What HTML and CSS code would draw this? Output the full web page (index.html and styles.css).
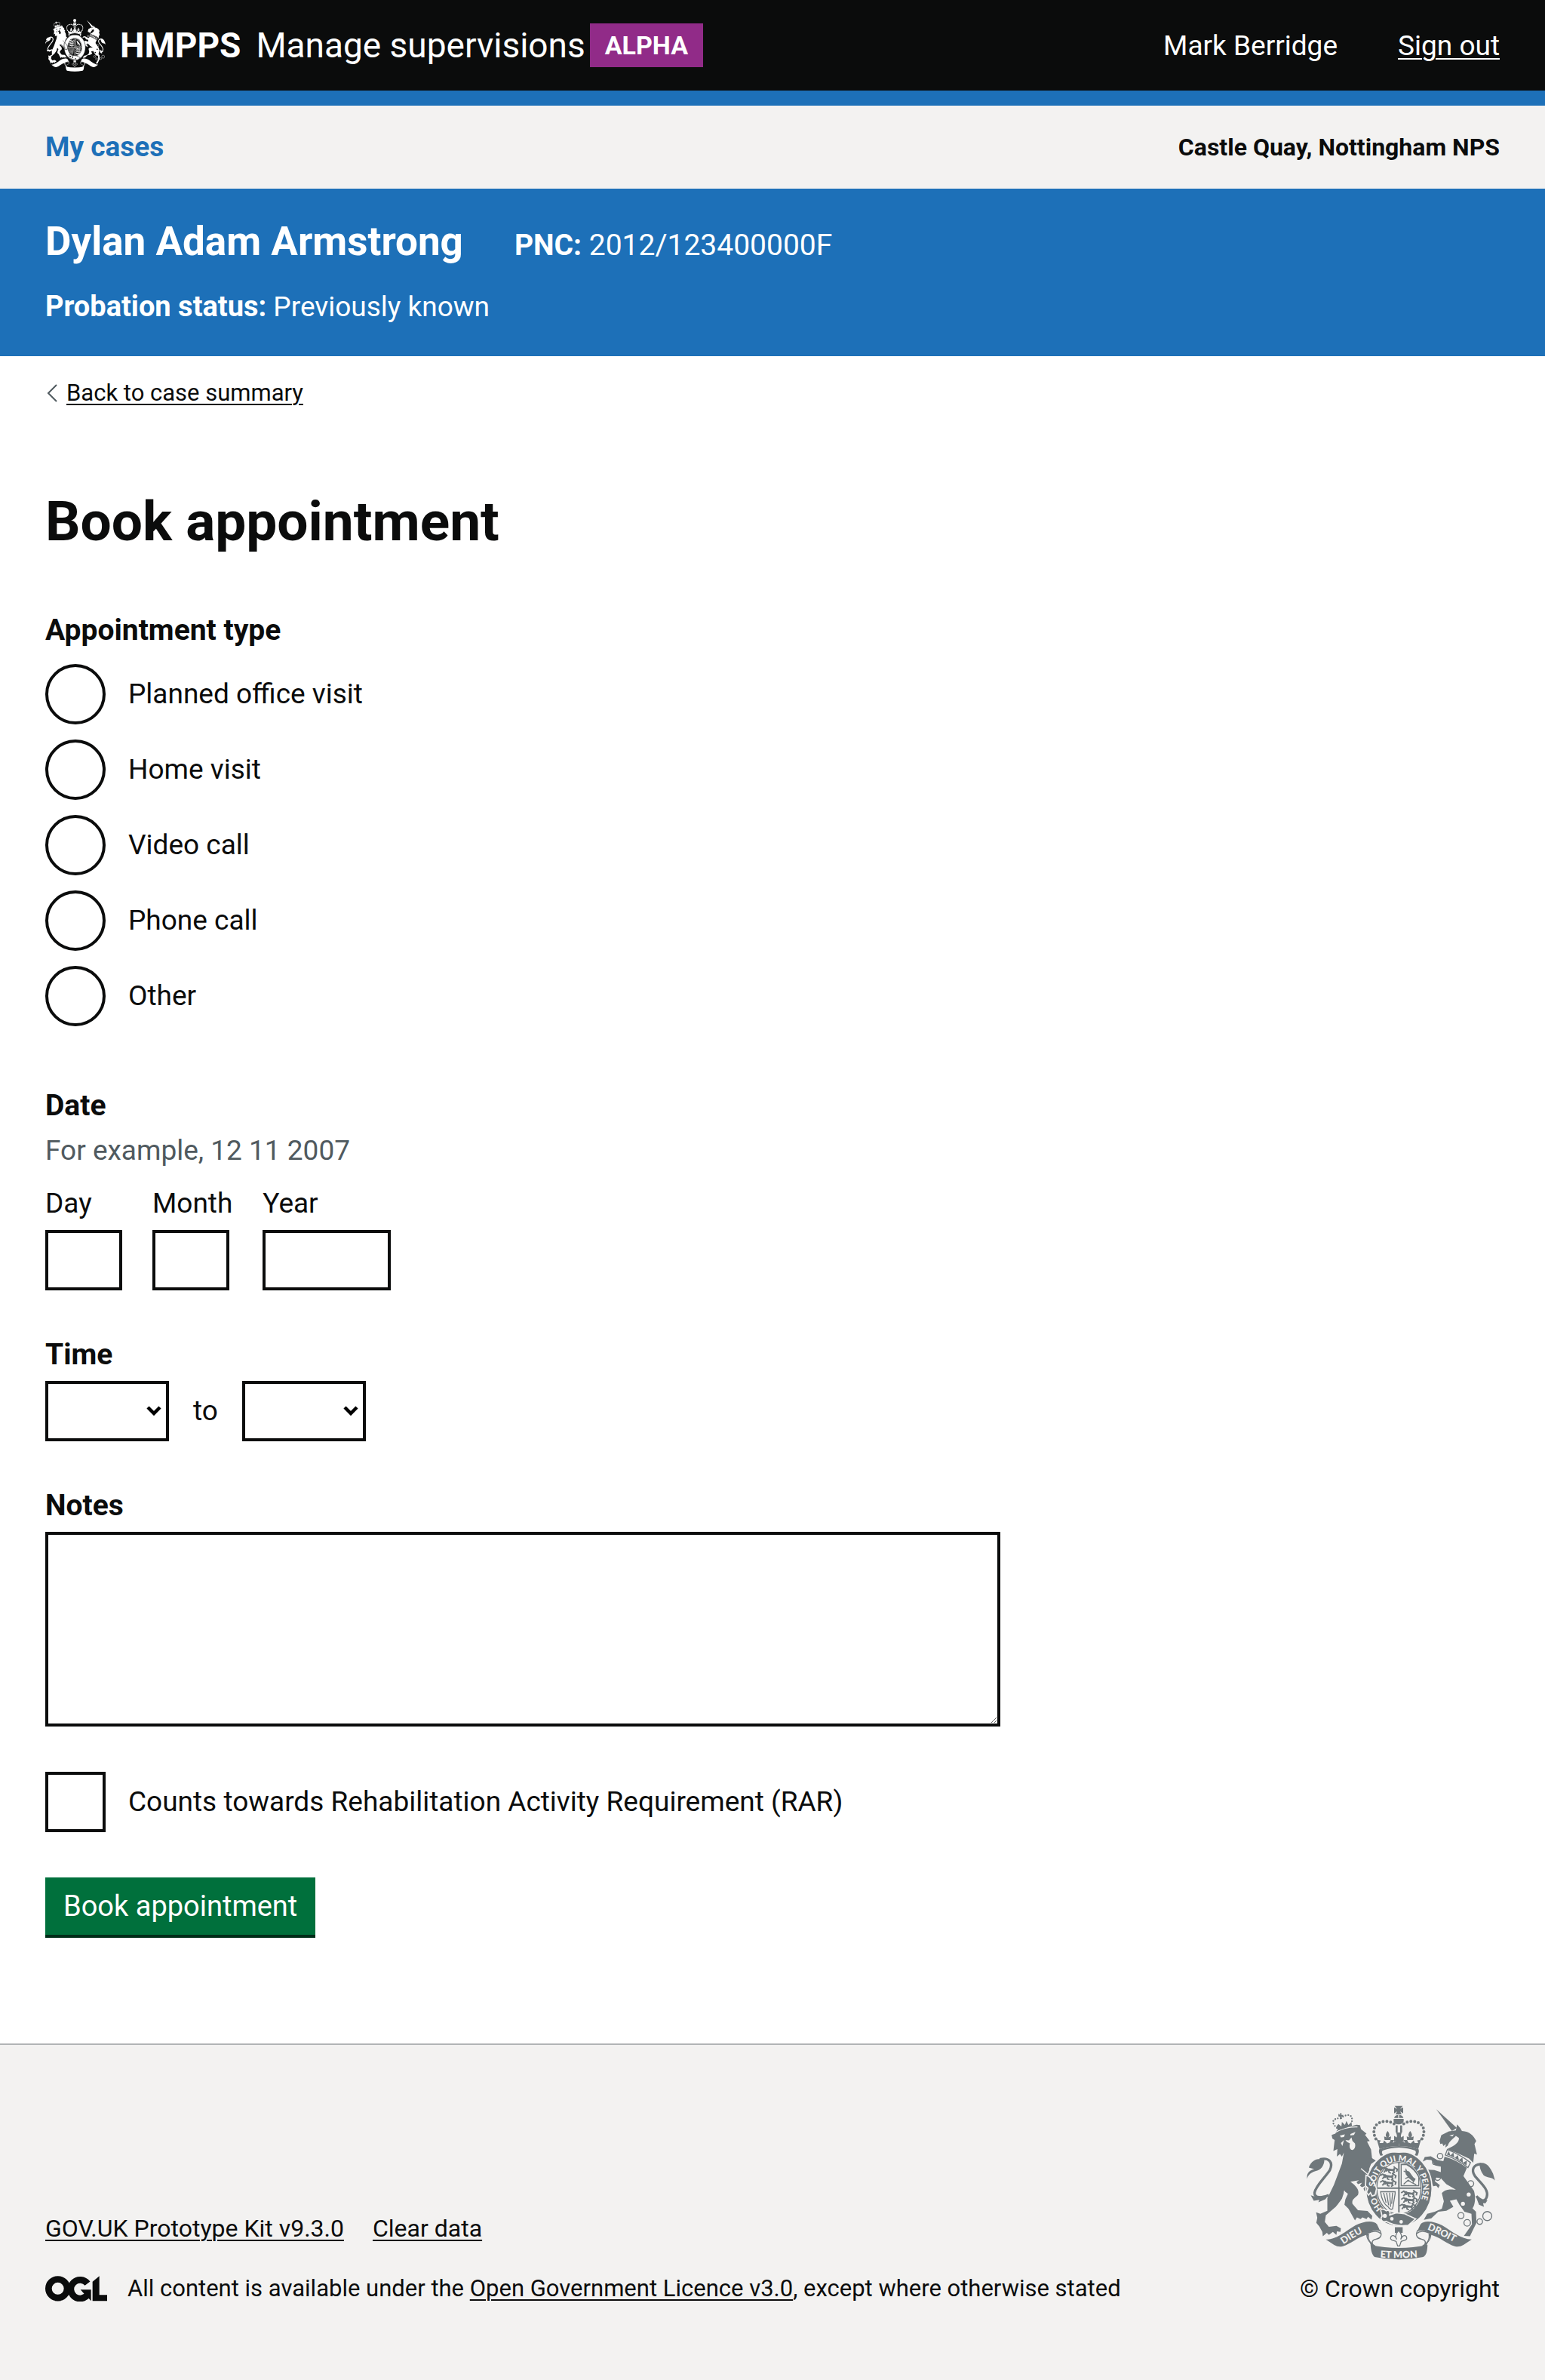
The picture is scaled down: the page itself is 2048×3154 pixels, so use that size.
FILE: index.html
```html
<!DOCTYPE html>
<html lang="en">
<head>
<meta charset="utf-8">
<meta name="viewport" content="width=device-width, initial-scale=1">
<title>Book appointment - Manage supervisions</title>
<link rel="stylesheet" href="styles.css">
</head>
<body>
<svg class="sprite" aria-hidden="true">
  <defs>
    <g id="ribbon-half">
      <path class="ink" d="M172 622C215 622 250 590 290 566C320 550 362 543 376 562L389 590C370 582 350 588 335 603C300 612 270 640 240 649Q222 654 205 644Z"/>
      <path class="line" d="M335 600C334 622 350 640 368 648M386 584C400 606 388 618 372 621C356 624 352 634 362 646M343 596C360 588 380 588 390 598"/>
      <path class="ink" d="M334 600L352 648L366 655L360 640C344 628 342 616 344 598Z"/>
    </g>
    <g id="crown-half">
      <path class="beads" d="M371 222C356 190 362 160 402 152C420 150 434 155 446 163"/>
      <path class="ink" d="M372 214L386 262Q424 250 463 250V222L456 206L452 228L438 238L444 226L430 226L426 236L416 240L404 228L400 238L386 238L390 228L380 226Z"/>
      <path class="ink" d="M418 190C428 202 426 212 420 216L432 212L430 226H406L404 212L415 216C409 210 409 202 418 190Z"/>
      <rect class="ink" x="450" y="168" width="8" height="28"/>
      <path class="ink" d="M385 262Q424 250 464 250V256Q425 258 398 268Q392 276 400 286L390 289Q380 274 385 262Z"/>
    </g>
    <g id="lion-row">
      <path class="line" d="M0 8L7 3L12 9L20 8L30 10L36 4L32 0M12 9L6 18M18 9L20 18L25 20M30 10L34 18L29 21M36 4L42 8L40 16M12 9L14 15"/>
      <path class="ink" d="M6 3L14 3L20 8L36 9L34 14L14 13Z"/>
    </g>
    <symbol id="crest" viewBox="96 88 750 616" preserveAspectRatio="none">
      <!-- lion -->
      <path class="ink" d="M195 206L210 201L216 187L294 165L308 167L312 183L334 201L328 206L347 230L336 232L352 264L356 298L371 308L352 322L344 343L362 374L374 420L368 445L356 449L354 432L342 446L336 436L342 420L326 430L322 420L330 408L316 414L308 408L316 396L300 402L294 394L304 386L270 392C298 412 306 428 300 445C288 458 274 462 278 480L300 506L338 509L357 528L354 543L340 532L334 541L318 534L310 541L296 534L288 546L280 532L262 500L246 484L250 462L260 440L246 430L236 460L214 490L172 526L168 552L184 572L214 568L232 578L230 592L216 590L214 604L200 592L184 604L176 596L160 609L158 592L146 570L134 556L138 536L133 514L150 520L178 508L178 458L204 405L236 320L244 276L236 292L228 282L216 292L218 262L202 270L207 226L198 220Z"/>
      <path class="paper" d="M228 208L248 204L244 214L232 216ZM270 202L290 194L284 206L270 208ZM250 226L264 228L274 216L278 230L288 240C292 256 284 266 277 266C268 264 264 254 268 240L256 234ZM232 238L244 226L238 250Z"/>
      <path class="thin-paper" d="M312 340L350 372M246 428C246 470 226 482 214 492M210 196Q250 172 298 174"/>
      <path class="ink" d="M104 336C116 302 146 298 166 304C166 328 152 346 130 350C112 356 100 366 97 382C94 360 106 346 126 342Z"/>
      <path class="tail" d="M148 303C186 294 202 316 188 346C170 374 130 410 127 436C126 458 156 458 184 446"/>
      <path class="ink" d="M112 446L132 452L184 444L170 462L142 474L146 464L124 468Z"/>
      <!-- lion's crown -->
      <path class="beads small" d="M216 178C190 156 200 138 230 140C262 116 284 126 274 160"/>
      <path class="ink" d="M214 172L220 188L276 170L274 154L262 166L254 150L248 166L236 154L234 172L222 162ZM222 122L229 126L228 119L235 120L234 126L242 126L240 133L235 132L236 142L228 143L229 133L222 132Z"/>
      <!-- unicorn -->
      <path class="ink" d="M612 104L694 178L674 190Z"/>
      <path class="ink" d="M625 230L632 207L662 192L690 188L695 164L708 180L714 190C745 192 760 208 771 230L764 242L774 284L763 280L759 316L742 300L700 280L655 262C690 248 704 232 702 218L690 210C676 224 662 234 658 248L648 256L650 242L640 250L636 240L628 242Z"/>
      <path class="paper" d="M664 208L682 204L676 212Z"/>
      <path class="line" d="M656 264Q704 282 748 316L738 336Q694 302 648 286Z"/>
      <path class="ink" d="M654 284L662 270L668 288L680 276L684 298L698 286L702 306L716 296L718 316L734 308L732 328Q694 298 654 284Z"/>
      <path class="ink" d="M645 292Q694 306 734 337L720 370L762 428C770 456 766 486 756 498L770 512L772 556L760 580L746 609L722 608L740 582L754 562L752 520L724 512L704 484L692 462L666 468L680 492L652 508L620 512L592 538L562 544L576 520L606 512L634 500L642 470L634 438C650 418 676 424 690 424L652 402L630 378L612 376L606 390L626 406L620 418L612 408L600 410L588 388L576 344L604 346L630 354L630 332L608 328L592 306L574 304L558 312L566 294L590 291L616 306L640 310Z"/>
      <path class="tail" d="M790 322C758 324 750 346 766 370C790 398 822 424 813 452C806 474 790 470 772 450"/>
      <path class="ink" d="M784 318C812 312 826 334 838 360L846 388C836 372 812 378 800 366C788 350 784 334 784 318ZM768 446L784 464L816 466L808 478L798 478L802 492L782 484Z"/>
      <g class="chain">
        <circle cx="627" cy="290" r="11"/><circle cx="606" cy="315" r="9"/><circle cx="617" cy="375" r="12"/>
        <circle cx="749" cy="400" r="12"/><circle cx="710" cy="527" r="12"/><circle cx="735" cy="556" r="13"/>
        <circle cx="785" cy="551" r="11"/><circle cx="815" cy="529" r="18"/>
      </g>
      <circle class="paper" cx="741" cy="443" r="8"/><circle class="paper" cx="718" cy="480" r="8"/>
      <!-- garter and shield -->
      <ellipse class="garter" cx="463" cy="420" rx="132" ry="150"/>
      <ellipse class="paper" cx="463" cy="418" rx="92" ry="107"/>
      <ellipse class="line" cx="463" cy="418" rx="88" ry="103"/>
      <path class="cross" d="M463 316V520M376 418H550"/>
      <g transform="translate(388 332) scale(1.5 1.3)"><use href="#lion-row" x="4"/><use href="#lion-row" y="20"/><use href="#lion-row" y="40"/></g>
      <g transform="translate(472 426) scale(1.5 1.3)"><use href="#lion-row"/><use href="#lion-row" y="20"/><use href="#lion-row" x="-4" y="40"/></g>
      <path class="line" d="M472 324V408H542V372Q524 340 494 324ZM482 402L500 386L514 396L532 404M482 350L496 356L510 370L526 384L518 398M496 356L490 340M510 370L488 380"/>
      <path class="ink" d="M488 346L504 352L520 374L530 382L520 392L500 376L490 362Z"/>
      <path class="line" d="M388 432H448V440L438 500Q428 506 420 492Q396 478 390 432M402 436L412 476M414 436L422 486M426 436L430 492M438 436L434 480"/>
      <!-- lion's paw over the garter -->
      <path class="paw" d="M332 366C352 372 366 388 374 420L368 445L356 449L350 436L342 446L334 434L340 418L330 408Z"/>
      <!-- buckle -->
      <path class="buckle" d="M392 512C386 500 402 498 412 508C426 500 432 520 424 526L452 516L486 520L530 540L500 566Q450 572 412 550C396 556 386 540 396 530Z"/>
      <circle class="paper" cx="435" cy="540" r="7"/><circle class="paper" cx="472" cy="552" r="7"/>
      <circle class="paper" cx="407" cy="528" r="8"/>
      <!-- crown -->
      <ellipse class="paper" cx="463" cy="266" rx="74" ry="11"/>
      <use href="#crown-half"/><use href="#crown-half" transform="matrix(-1 0 0 1 926 0)"/>
      <path class="ink" d="M452 196H474L468 218L482 210V232L468 226L472 240H454L458 226L444 232V210L458 218ZM446 90H478L468 102L480 96V120L468 112L474 124H450L456 112L444 120V96L456 102ZM444 138Q447 126 462 126Q478 126 481 138ZM442 142H482V152Q476 164 462 164Q446 164 442 152Z"/>
      <path class="thin-paper" d="M462 126V138"/>
      <!-- ribbon -->
      <use href="#ribbon-half"/><use href="#ribbon-half" transform="matrix(-1 0 0 1 925 0)"/>
      <path class="ink" d="M350 644Q462 668 577 644C576 670 572 686 560 692Q462 712 366 692C354 680 352 664 350 644Z"/>
      <path class="ink" d="M447 573H478V596H447Z"/>
      <path class="fleur" d="M462 586C478 604 474 614 470 622C480 600 496 604 494 620C490 628 480 626 472 630L466 648H458L452 630C444 626 434 628 430 620C428 604 446 600 454 622C450 614 446 604 462 586Z"/>
    </symbol>
  </defs>
</svg>

<header class="header">
  <div class="header-brand">
    <svg class="header-crest" aria-hidden="true"><use href="#crest"/></svg>
    <strong class="header-org">HMPPS</strong>
    <span class="header-service">Manage supervisions</span>
    <strong class="tag">ALPHA</strong>
  </div>
  <div class="header-user">
    <span>Mark Berridge</span>
    <a href="#">Sign out</a>
  </div>
</header>

<nav class="subnav" aria-label="Primary">
  <a class="subnav-link" href="#">My cases</a>
  <span class="subnav-office">Castle Quay, Nottingham NPS</span>
</nav>

<section class="person" aria-label="Case details">
  <div class="person-row">
    <strong class="person-name">Dylan Adam Armstrong</strong>
    <span class="person-pnc"><b>PNC:</b> 2012/123400000F</span>
  </div>
  <p class="person-status"><b>Probation status:</b> Previously known</p>
</section>

<div class="back">
  <svg class="back-arrow" viewBox="0 0 14 24" aria-hidden="true"><path d="M13 1L2 12L13 23"/></svg>
  <a href="#">Back to case summary</a>
</div>

<main class="main">
  <h1>Book appointment</h1>
  <form class="form">
    <fieldset>
      <legend class="label">Appointment type</legend>
      <div class="radios">
        <div class="choice"><input type="radio" name="type" id="type-office"><label for="type-office">Planned office visit</label></div>
        <div class="choice"><input type="radio" name="type" id="type-home"><label for="type-home">Home visit</label></div>
        <div class="choice"><input type="radio" name="type" id="type-video"><label for="type-video">Video call</label></div>
        <div class="choice"><input type="radio" name="type" id="type-phone"><label for="type-phone">Phone call</label></div>
        <div class="choice"><input type="radio" name="type" id="type-other"><label for="type-other">Other</label></div>
      </div>
    </fieldset>

    <fieldset class="date-group">
      <legend class="label">Date</legend>
      <p class="hint">For example, 12 11 2007</p>
      <div class="date">
        <div class="date-item"><label for="day">Day</label><input class="control short" type="text" inputmode="numeric" id="day"></div>
        <div class="date-item"><label for="month">Month</label><input class="control short" type="text" inputmode="numeric" id="month"></div>
        <div class="date-item"><label for="year">Year</label><input class="control year" type="text" inputmode="numeric" id="year"></div>
      </div>
    </fieldset>

    <fieldset>
      <legend class="label">Time</legend>
      <div class="time">
        <select class="control time-select" id="start" aria-label="Start time"><option></option></select>
        <label for="end">to</label>
        <select class="control time-select" id="end"><option></option></select>
      </div>
    </fieldset>

    <div class="notes">
      <label class="label" for="notes">Notes</label>
      <textarea class="control textarea" id="notes"></textarea>
    </div>

    <div class="choice"><input type="checkbox" id="rar"><label for="rar">Counts towards Rehabilitation Activity Requirement (RAR)</label></div>

    <button class="button" type="submit">Book appointment</button>
  </form>
</main>

<footer class="footer">
  <div class="footer-meta">
    <div class="footer-links">
      <a href="#">GOV.UK Prototype Kit v9.3.0</a>
      <a href="#">Clear data</a>
    </div>
    <div class="licence">
      <svg class="ogl" viewBox="30 42 246 101" role="img" aria-label="OGL">
        <circle cx="80" cy="92" r="37"/>
        <path d="M198 72A37 37 0 1 0 200 114"/>
        <path class="solid" d="M170 96H212V141L200 128L182 110ZM218 65L245 42V117H276V141H218Z"/>
      </svg>
      <span>All content is available under the <a href="#">Open Government Licence v3.0</a>, except where otherwise stated</span>
    </div>
  </div>
  <div class="copyright">
    <svg class="footer-crest" viewBox="96 88 750 616" role="img" aria-label="Royal coat of arms">
      <defs>
        <path id="garter-line" d="M396 499A96 110 0 1 1 530 499"/>
        <path id="dieu-line" d="M242 642Q290 608 350 580"/>
        <path id="mon-line" d="M350 690Q462 702 575 690"/>
        <path id="droit-line" d="M576 582Q630 604 710 648"/>
      </defs>
      <use href="#crest" x="96" y="88" width="750" height="616"/>
      <g class="motto">
        <text><textPath href="#garter-line">HO&emsp;&ensp;SOIT QUI MAL Y PENSE</textPath></text>
        <text class="scroll"><textPath href="#dieu-line">DIEU</textPath></text>
        <text class="scroll" text-anchor="middle"><textPath href="#mon-line" startOffset="50%">ET MON</textPath></text>
        <text class="scroll"><textPath href="#droit-line">DROIT</textPath></text>
      </g>
    </svg>
    <span>© Crown copyright</span>
  </div>
</footer>
</body>
</html>
```
FILE: styles.css
```css
:root {
  --black: #0b0c0c;
  --blue: #1d70b8;
  --grey: #f3f2f1;
  --gutter: 60px;
}

* { box-sizing: border-box; }

body {
  margin: 0;
  background: #fff;
  color: var(--black);
  font: 37px/50px Roboto, "Liberation Sans", sans-serif;
}

p, h1, fieldset { margin: 0; padding: 0; border: 0; min-width: 0; }
legend { padding: 0; }

a {
  color: inherit;
  text-decoration-thickness: 2px;
  text-underline-offset: 4px;
}

.sprite { position: absolute; width: 0; height: 0; }

/* Header */
.header {
  display: flex;
  justify-content: space-between;
  align-items: center;
  padding: 25px var(--gutter);
  background: var(--black);
  border-bottom: 20px solid var(--blue);
  color: #fff;
}
.header-brand { display: flex; align-items: center; font-size: 46px; }
.header-crest { width: 80px; height: 70px; margin-right: 19px; color: #fff; --paper: var(--black); }
.header-org { margin-right: 20px; }
.header-service { margin-right: 6px; }
.tag {
  padding: 4px 20px;
  background: #912b88;
  font-size: 34px;
}
.header-user { display: flex; gap: 80px; padding-top: 2px; }

/* Sub navigation */
.subnav {
  display: flex;
  justify-content: space-between;
  align-items: center;
  padding: 30px var(--gutter);
  background: var(--grey);
}
.subnav-link { color: var(--blue); font-weight: 700; text-decoration: none; }
.subnav-office { font-size: 32px; font-weight: 700; }

/* Person banner */
.person {
  padding: 40px var(--gutter);
  background: var(--blue);
  color: #fff;
}
.person-row { display: flex; align-items: baseline; gap: 68px; margin-bottom: 32px; }
.person-name { font-size: 53px; line-height: 60px; }
.person-pnc { font-size: 39px; }
.person-status b { font-size: 38px; line-height: 40px; }

/* Back link */
.back {
  display: flex;
  align-items: center;
  gap: 12px;
  padding: 29px var(--gutter) 0;
  font-size: 31px;
  line-height: 40px;
}
.back-arrow { width: 14px; height: 24px; margin-left: 2px; fill: none; stroke: #505a5f; stroke-width: 2; }

/* Form */
.main { padding: 110px var(--gutter) 140px; }
h1 { margin-bottom: 79px; font-size: 73px; line-height: 80px; font-weight: 700; }
.form { display: flex; flex-direction: column; align-items: flex-start; gap: 60px; }
.label { display: block; font-size: 39px; font-weight: 700; }
.radios { display: flex; flex-direction: column; gap: 20px; padding-top: 20px; }
.date-group { margin-top: 20px; }
.choice { display: flex; align-items: center; gap: 30px; }
.choice input {
  appearance: none;
  width: 80px;
  height: 80px;
  margin: 0;
  border: 4px solid var(--black);
  background: #fff;
}
.choice input[type="radio"] { border-radius: 50%; }
.choice input:checked { box-shadow: inset 0 0 0 16px #fff; background: var(--black); }

.hint { margin-top: 10px; color: #505a5f; }
.date { display: flex; gap: 40px; margin-top: 20px; }
.date-item { display: flex; flex-direction: column; gap: 10px; }

.control {
  height: 80px;
  padding: 10px;
  border: 4px solid var(--black);
  border-radius: 0;
  background-color: #fff;
  color: inherit;
  font: inherit;
}
.short { width: 102px; }
.year { width: 170px; }
.time { display: flex; align-items: center; gap: 32px; padding-top: 10px; }
.time-select {
  appearance: none;
  width: 164px;
  background-image: url("data:image/svg+xml,%3Csvg xmlns='http://www.w3.org/2000/svg' width='20' height='14'%3E%3Cpath d='M2 2l8 8 8-8' fill='none' stroke='%23000' stroke-width='4.5'/%3E%3C/svg%3E");
  background-repeat: no-repeat;
  background-position: right 6px center;
}
.notes { width: 100%; max-width: 1266px; display: flex; flex-direction: column; gap: 10px; }
.textarea { width: 100%; height: 258px; resize: vertical; }

.button {
  height: 80px;
  padding: 0 24px 4px;
  border: 0;
  background: #00703c;
  box-shadow: inset 0 -4px 0 #002d18;
  color: #fff;
  font: inherit;
  font-size: 38px;
}

/* Footer */
.footer {
  display: flex;
  justify-content: space-between;
  align-items: flex-end;
  padding: 80px var(--gutter) 101px;
  background: var(--grey);
  border-top: 2px solid #b1b4b6;
  font-size: 32px;
  line-height: 40px;
}
.footer-meta { display: flex; flex-direction: column; gap: 40px; }
.footer-links { display: flex; gap: 38px; }
.licence { display: flex; align-items: center; gap: 27px; font-size: 31px; }
.ogl { width: 82px; height: 34px; fill: none; stroke: var(--black); stroke-width: 26; }
.ogl .solid { fill: var(--black); stroke: none; }
.copyright { display: flex; flex-direction: column; align-items: flex-end; gap: 18px; }
.footer-crest { width: 250px; height: 205px; margin-right: 6px; color: #6f777b; --paper: var(--grey); }

/* Coat of arms */
.ink { fill: currentColor; }
.paper { fill: var(--paper); }
.line { fill: none; stroke: currentColor; stroke-width: 4; }
.cross { fill: none; stroke: currentColor; stroke-width: 6; }
.tail { fill: none; stroke: currentColor; stroke-width: 10; }
.thin-paper { fill: none; stroke: var(--paper); stroke-width: 4; }
.beads { fill: none; stroke: currentColor; stroke-width: 12; stroke-linecap: round; stroke-dasharray: 0 15; }
.beads.small { stroke-width: 7; stroke-dasharray: 0 11; }
.chain { fill: none; stroke: currentColor; stroke-width: 4; }
.garter, .paw, .buckle { fill: currentColor; stroke: var(--paper); stroke-width: 5; }
.fleur { fill: var(--paper); stroke: currentColor; stroke-width: 4; }
.motto { fill: var(--paper); font-family: Lato, sans-serif; font-size: 33px; font-weight: 900; }
.scroll { font-size: 38px; }
```
